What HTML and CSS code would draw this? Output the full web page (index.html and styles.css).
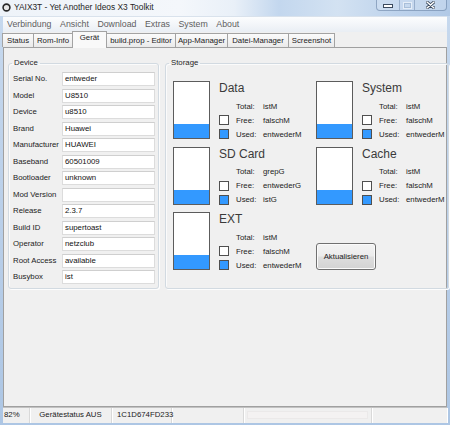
FILE: index.html
```html
<!DOCTYPE html>
<html>
<head>
<meta charset="utf-8">
<title>YAIX3T</title>
<link rel="stylesheet" href="styles.css">
</head>
<body>
<div class="window">
  <div class="titlebar">
    <svg class="appicon" width="9" height="9" viewBox="0 0 9 9"><circle cx="4.5" cy="4.5" r="3.4" fill="#e8e8e8" stroke="#2b2b2b" stroke-width="1.6"/></svg>
    <span class="title">YAIX3T - Yet Another Ideos X3 Toolkit</span>
    <div class="caption">
      <span class="cbtn cmin"><svg width="10" height="4" viewBox="0 0 10 4"><rect x="0.5" y="0.5" width="9" height="3" fill="#fff" stroke="#3b4a5e"/></svg></span>
      <span class="cbtn cmax"><svg width="9" height="7" viewBox="0 0 9 7"><rect x="0.5" y="0.5" width="8" height="6" fill="none" stroke="#e6eef8" stroke-width="1"/><rect x="1.5" y="1.5" width="6" height="4" fill="none" stroke="#a9bfd9" stroke-width="1"/></svg></span>
      <span class="cbtn cclose"><svg width="9" height="8" viewBox="0 0 9 8"><path d="M1 1 L8 7 M8 1 L1 7" stroke="#3b4a5e" stroke-width="3" stroke-linecap="round"/><path d="M1 1 L8 7 M8 1 L1 7" stroke="#fff" stroke-width="1.5" stroke-linecap="round"/></svg></span>
    </div>
  </div>
  <div class="client">
    <div class="menubar">
      <span class="menu">Verbindung</span>
      <span class="menu">Ansicht</span>
      <span class="menu">Download</span>
      <span class="menu">Extras</span>
      <span class="menu">System</span>
      <span class="menu">About</span>
    </div>
    <div class="tabs">
      <span class="tab t-status">Status</span>
      <span class="tab t-rom">Rom-Info</span>
      <span class="tab t-geraet active">Gerät</span>
      <span class="tab t-build">build.prop - Editor</span>
      <span class="tab t-app">App-Manager</span>
      <span class="tab t-datei">Datei-Manager</span>
      <span class="tab t-shot">Screenshot</span>
    </div>
    <div class="panel">
      <fieldset class="group device">
        <legend>Device</legend>
        <div class="props">
          <span class="lbl">Serial No.</span><span class="field">entweder</span>
          <span class="lbl">Model</span><span class="field">U8510</span>
          <span class="lbl">Device</span><span class="field">u8510</span>
          <span class="lbl">Brand</span><span class="field">Huawei</span>
          <span class="lbl">Manufacturer</span><span class="field">HUAWEI</span>
          <span class="lbl">Baseband</span><span class="field">60501009</span>
          <span class="lbl">Bootloader</span><span class="field">unknown</span>
          <span class="lbl">Mod Version</span><span class="field"></span>
          <span class="lbl">Release</span><span class="field">2.3.7</span>
          <span class="lbl">Build ID</span><span class="field">supertoast</span>
          <span class="lbl">Operator</span><span class="field">netzclub</span>
          <span class="lbl">Root Access</span><span class="field">available</span>
          <span class="lbl">Busybox</span><span class="field">ist</span>
        </div>
      </fieldset>
      <fieldset class="group storage">
        <legend>Storage</legend>
        <div class="disks">
          <div class="disk">
            <div class="bar"><div class="used" style="height:25%"></div></div>
            <div class="info">
              <div class="dname">Data</div>
              <div class="stats">
                <span></span><span>Total:</span><span>istM</span>
                <span class="chk"></span><span>Free:</span><span>falschM</span>
                <span class="chk blue"></span><span>Used:</span><span>entwederM</span>
              </div>
            </div>
          </div>
          <div class="disk">
            <div class="bar"><div class="used" style="height:25%"></div></div>
            <div class="info">
              <div class="dname">System</div>
              <div class="stats">
                <span></span><span>Total:</span><span>istM</span>
                <span class="chk"></span><span>Free:</span><span>falschM</span>
                <span class="chk blue"></span><span>Used:</span><span>entwederM</span>
              </div>
            </div>
          </div>
          <div class="disk">
            <div class="bar"><div class="used" style="height:25%"></div></div>
            <div class="info">
              <div class="dname">SD Card</div>
              <div class="stats">
                <span></span><span>Total:</span><span>grepG</span>
                <span class="chk"></span><span>Free:</span><span>entwederG</span>
                <span class="chk blue"></span><span>Used:</span><span>istG</span>
              </div>
            </div>
          </div>
          <div class="disk">
            <div class="bar"><div class="used" style="height:25%"></div></div>
            <div class="info">
              <div class="dname">Cache</div>
              <div class="stats">
                <span></span><span>Total:</span><span>istM</span>
                <span class="chk"></span><span>Free:</span><span>falschM</span>
                <span class="chk blue"></span><span>Used:</span><span>entwederM</span>
              </div>
            </div>
          </div>
          <div class="disk">
            <div class="bar"><div class="used" style="height:25%"></div></div>
            <div class="info">
              <div class="dname">EXT</div>
              <div class="stats">
                <span></span><span>Total:</span><span>istM</span>
                <span class="chk"></span><span>Free:</span><span>falschM</span>
                <span class="chk blue"></span><span>Used:</span><span>entwederM</span>
              </div>
            </div>
          </div>
          <div class="disk">
            <button class="refresh" type="button">Aktualisieren</button>
          </div>
        </div>
      </fieldset>
    </div>
    <div class="statusbar">
      <span class="sb sb1">82%</span>
      <span class="sb sb2">Gerätestatus AUS</span>
      <span class="sb sb3">1C1D674FD233</span>
      <span class="sb sb4"></span>
      <span class="sb sb5"><span class="progress"></span></span>
      <span class="sb sb6"></span>
    </div>
  </div>
</div>
</body>
</html>
```

FILE: styles.css
```css
* { box-sizing: border-box; }
html, body { margin: 0; padding: 0; }
body {
  width: 450px;
  height: 425px;
  overflow: hidden;
  font-family: "Liberation Sans", Arial, sans-serif;
  font-size: 7.8px;
  color: #1b1b1b;
  background: #b9cfe9;
}
.window {
  width: 450px;
  height: 425px;
  display: flex;
  flex-direction: column;
  background: linear-gradient(to bottom, #c7d9ee, #adc6e4);
}
.titlebar {
  height: 16px;
  flex: none;
  display: flex;
  align-items: flex-start;
  background: linear-gradient(to right, #eef3f9 0%, #f4f7fb 40%, #e9f0f8 52%, #c3d7ee 62%, #d3e2f2 75%, #bed3ec 88%, #b1c9e6 100%);
}
.appicon { margin: 3px 0 0 2px; flex: none; }
.title {
  font-size: 8.4px;
  line-height: 10px;
  margin: 2px 0 0 3px;
  color: #262626;
  white-space: nowrap;
}
.caption {
  margin-left: auto;
  margin-right: 3px;
  display: flex;
  height: 11px;
  border: 1px solid rgba(70, 100, 140, 0.45);
  border-top: none;
  border-radius: 0 0 4px 4px;
  background: rgba(220, 232, 246, 0.35);
}
.cbtn {
  display: flex;
  align-items: center;
  justify-content: center;
  height: 10px;
}
.cmin { width: 23px; border-right: 1px solid rgba(70, 100, 140, 0.35); }
.cmin svg { margin-top: 2px; }
.cmax { width: 15px; border-right: 1px solid rgba(70, 100, 140, 0.35); }
.cclose { width: 31px; }

.client {
  flex: 1;
  margin: 0 3px 2px 3px;
  display: flex;
  flex-direction: column;
  background: #f0f0f0;
}
.menubar {
  height: 16px;
  flex: none;
  display: flex;
  border-top: 1px solid #d9e2ec;
  background: linear-gradient(to bottom, #fcfdfe, #f1f4f8 60%, #e9eef4);
}
.menu {
  padding: 0 4.5px 0 4px;
  line-height: 15px;
  font-size: 8.8px;
  color: #5e5e5e;
}
.menu:first-child { padding-left: 4px; }

.tabs {
  height: 15px;
  flex: none;
  display: flex;
  align-items: flex-end;
  position: relative;
  z-index: 1;
  margin-left: -1px;
}
.tab {
  height: 14px;
  border: 1px solid #a3a3a3;
  border-bottom: none;
  margin-right: -1px;
  background: linear-gradient(to bottom, #fbfbfb, #eaeaea);
  text-align: center;
  line-height: 13px;
  white-space: nowrap;
  color: #1b1b1b;
}
.tab.active {
  height: 17px;
  margin-bottom: -1px;
  background: #f9f9f9;
  line-height: 12px;
}
.t-status { width: 32px; }
.t-rom { width: 40px; }
.t-geraet { width: 35px; }
.t-build { width: 70px; }
.t-app { width: 53px; }
.t-datei { width: 62px; }
.t-shot { width: 47px; }

.panel {
  height: 360px;
  flex: none;
  border: 1px solid #a0a0a0;
  background: #f0f0f0;
  display: flex;
  align-items: flex-start;
  gap: 6px;
  padding: 10px 4px 0 4px;
}
.group {
  margin: 0;
  height: 231px;
  border: 1px solid #d2dae1;
  border-radius: 3px;
  box-shadow: 1px 1px 0 #fdfdfd, inset 1px 1px 0 #fbfbfb;
  padding: 0 3px 4px 3px;
}
.group legend {
  padding: 0 2px;
  line-height: 10px;
  color: #262626;
}
.device { width: 151px; }
.storage { width: 277px; }

.props {
  display: grid;
  grid-template-columns: 50px 93px;
  grid-auto-rows: 14px;
  row-gap: 2.5px;
  margin-top: 4px;
}
.lbl {
  padding-left: 1px;
  line-height: 14px;
  white-space: nowrap;
  color: #222;
}
.field {
  background: #fff;
  border: 1px solid #dcdcdc;
  border-top-color: #cfcfcf;
  padding-left: 2px;
  line-height: 12px;
  color: #111;
}

.disks {
  display: grid;
  grid-template-columns: 143px 1fr;
  grid-auto-rows: 58px;
  row-gap: 7.5px;
  margin: 13px 0 0 4px;
}
.disk { display: flex; align-items: flex-start; }
.bar {
  width: 37px;
  height: 58px;
  flex: none;
  border: 1px solid #5c5c5c;
  background: #fff;
  display: flex;
  flex-direction: column;
  justify-content: flex-end;
}
.used { background: #3399ff; }
.info { margin-left: 9px; }
.dname {
  font-size: 12px;
  line-height: 14px;
  color: #3a3a3a;
  white-space: nowrap;
}
.stats {
  display: grid;
  grid-template-columns: 17px 27px auto;
  grid-auto-rows: 14px;
  align-items: center;
  margin-top: 4px;
  white-space: nowrap;
  color: #222;
}
.chk {
  width: 10px;
  height: 10px;
  border: 1px solid #4f4f4f;
  background: #fff;
}
.chk.blue { background: #3399ff; }

.refresh {
  width: 60px;
  height: 27px;
  margin-top: 31px;
  border: 1px solid #707070;
  border-radius: 3px;
  background: linear-gradient(to bottom, #f3f3f3 0%, #ececec 48%, #dedede 52%, #d3d3d3 100%);
  box-shadow: inset 0 0 0 1px #fbfbfb;
  font-family: "Liberation Sans", Arial, sans-serif;
  font-size: 7.8px;
  color: #1b1b1b;
  padding: 0;
}

.statusbar {
  flex: 1;
  display: flex;
  border-top: 1px solid #c2c2c2;
  background: #f0f0f0;
}
.sb {
  line-height: 14px;
  white-space: nowrap;
  border-right: 1px solid #d9d9d9;
  box-shadow: 1px 0 0 #ffffff;
  color: #1b1b1b;
}
.sb1 { width: 27px; padding-left: 1px; }
.sb2 { width: 82px; text-align: center; }
.sb3 { width: 60px; padding-left: 5px; }
.sb4 { width: 72px; }
.sb5 { width: 128px; padding: 3px 3px; display: flex; }
.sb6 { flex: 1; border-right: none; }
.progress {
  flex: 1;
  height: 8px;
  background: #f4f2f2;
  border: 1px solid #ebe9e9;
}
```
